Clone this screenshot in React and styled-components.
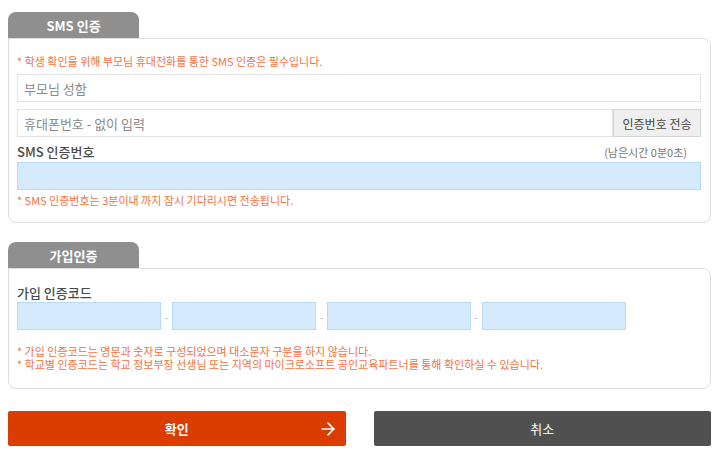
import React from 'react'
import styled, { createGlobalStyle } from 'styled-components'
import { ArrowRight } from 'lucide-react'

const GlobalStyle = createGlobalStyle`
  html, body { margin: 0; padding: 0; background: #fff; }
  body {
    font-family: "Noto Sans CJK KR", "Noto Sans", "Liberation Sans", sans-serif;
    color: #444;
  }
  * { box-sizing: border-box; }
`

const Page = styled.div`
  width: 720px;
  padding: 12px 9px 0 8px;
`

const Section = styled.section`
  margin-bottom: ${p => p.gap || 0}px;
`

const Tab = styled.div`
  width: 131px;
  height: 26px;
  background: #8f8f8f;
  border-radius: 8px 8px 0 0;
  color: #fff;
  font-size: 13px;
  font-weight: 700;
  display: flex;
  align-items: center;
  justify-content: center;
  line-height: 1;
`

const Box = styled.div`
  border: 1px solid #dddddd;
  border-radius: 0 8px 8px 8px;
  padding: ${p => p.pad};
  display: flex;
  flex-direction: column;
`

const Note = styled.p`
  margin: ${p => p.mt || 0}px 0 0;
  font-size: 11px;
  line-height: ${p => p.lh || 14}px;
  color: #f2733f;
`

const Field = styled.input`
  display: block;
  width: 100%;
  height: 28px;
  margin-top: ${p => p.mt || 0}px;
  border: 1px solid #e3e3e3;
  background: #fff;
  padding: 0 6px;
  font-family: inherit;
  font-size: 13px;
  color: #444;
  outline: none;
  &::placeholder { color: #8a8a8a; }
`

const InlineRow = styled.div`
  display: flex;
  margin-top: ${p => p.mt || 0}px;
`

const SendButton = styled.button`
  flex: 0 0 88px;
  height: 28px;
  border: 1px solid #d4d4d4;
  background: #efefef;
  font-family: inherit;
  font-size: 12px;
  color: #444;
  padding: 0;
`

const LabelRow = styled.div`
  display: flex;
  align-items: center;
  justify-content: space-between;
  height: ${p => p.h}px;
  margin-top: ${p => p.mt || 0}px;
  padding-right: 14px;
`

const Label = styled.span`
  font-size: 13px;
  font-weight: 500;
  color: #4a4a4a;
`

const Timer = styled.span`
  font-size: 11px;
  color: #777;
`

const BlueField = styled(Field)`
  background: #d5eafd;
  border-color: #b6dbf8;
  width: ${p => p.w || '100%'};
  flex: ${p => (p.w ? `0 0 ${p.w}` : 'initial')};
`

const CodeRow = styled.div`
  display: flex;
  align-items: center;
`

const Dash = styled.span`
  width: 11px;
  text-align: center;
  font-size: 10px;
  color: #aaa;
`

const Buttons = styled.div`
  display: flex;
  gap: 28px;
`

const ActionButton = styled.button`
  position: relative;
  flex: 1;
  height: 35px;
  border: 0;
  border-radius: 2px;
  background: ${p => (p.primary ? '#db3c00' : '#505050')};
  color: #fff;
  font-family: inherit;
  font-size: 13px;
  font-weight: ${p => (p.primary ? 700 : 400)};
  display: flex;
  align-items: center;
  justify-content: center;
  padding: 0;
`

const ArrowIcon = styled.span`
  position: absolute;
  right: 8px;
  top: 50%;
  transform: translateY(-50%);
  display: flex;
`

export default function App() {
  return (
    <>
      <GlobalStyle />
      <Page>
        <Section gap={19}>
          <Tab>SMS 인증</Tab>
          <Box pad="15px 9px 15px 8px">
            <Note>* 학생 확인을 위해 부모님 휴대전화를 통한 SMS 인증은 필수입니다.</Note>
            <Field mt={6} placeholder="부모님 성함" />
            <InlineRow mt={7}>
              <Field placeholder="휴대폰번호 - 없이 입력" />
              <SendButton>인증번호 전송</SendButton>
            </InlineRow>
            <LabelRow h={21} mt={4}>
              <Label>SMS 인증번호</Label>
              <Timer>(남은시간 0분0초)</Timer>
            </LabelRow>
            <BlueField />
            <Note mt={3}>* SMS 인증번호는 3분이내 까지 잠시 기다리시면 전송됩니다.</Note>
          </Box>
        </Section>

        <Section gap={22}>
          <Tab>가입인증</Tab>
          <Box pad="14px 9px 17px 8px">
            <LabelRow h={19}>
              <Label>가입 인증코드</Label>
            </LabelRow>
            <CodeRow>
              <BlueField w="144px" />
              <Dash>-</Dash>
              <BlueField w="144px" />
              <Dash>-</Dash>
              <BlueField w="144px" />
              <Dash>-</Dash>
              <BlueField w="144px" />
            </CodeRow>
            <Note mt={15} lh={13}>
              * 가입 인증코드는 영문과 숫자로 구성되었으며 대소문자 구분을 하지 않습니다.
              <br />
              * 학교별 인증코드는 학교 정보부장 선생님 또는 지역의 마이크로소프트 공인교육파트너를 통해 확인하실 수 있습니다.
            </Note>
          </Box>
        </Section>

        <Buttons>
          <ActionButton primary>
            확인
            <ArrowIcon>
              <ArrowRight size={20} strokeWidth={2} color="#fff" />
            </ArrowIcon>
          </ActionButton>
          <ActionButton>취소</ActionButton>
        </Buttons>
      </Page>
    </>
  )
}
